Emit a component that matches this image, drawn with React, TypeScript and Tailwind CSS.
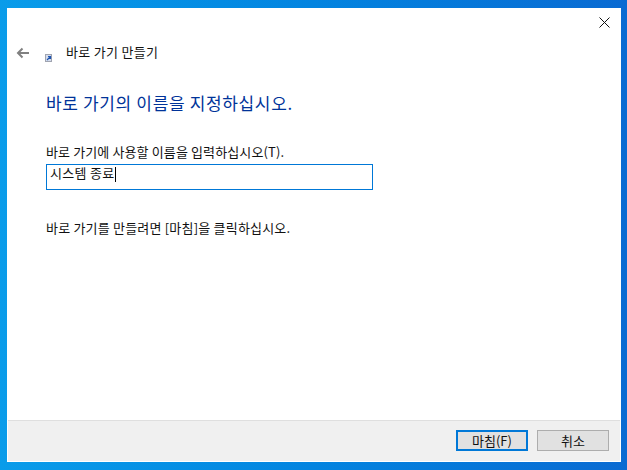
const font = "font-['Noto_Sans_CJK_KR','Liberation_Sans',sans-serif]";

function ShortcutIcon() {
  return (
    <svg width="7" height="8" viewBox="0 0 7 8" className="mt-[9px]">
      <rect x="0.5" y="0.5" width="6" height="7" fill="#d4dcec" stroke="#a0a4b0" />
      <path d="M2 6 L5 3 M3 2.5 H5.5 V5" stroke="#1f55b0" strokeWidth="1.2" fill="none" />
    </svg>
  );
}

export default function App() {
  return (
    <div className={`h-[470px] w-[627px] overflow-hidden bg-gradient-to-r from-[#0a9cea] via-[#0384e0] to-[#0a6ad2] pb-[8px] pl-[7px] pr-[6px] pt-[8px] ${font}`}>
      <div className="flex h-full flex-col border-x border-b border-white bg-white">
        <div className="flex flex-1 flex-col">
          <div className="flex justify-end pr-[10px] pt-[9px]">
            <svg width="11" height="11" viewBox="0 0 11 11">
              <path d="M0.5 0.5L10.5 10.5M10.5 0.5L0.5 10.5" stroke="#111" strokeWidth="1" fill="none" />
            </svg>
          </div>

          <div className="mt-[17px] flex items-start pl-[8px]">
            <svg width="13" height="12" viewBox="0 0 13 12" className="mt-[2px]">
              <path d="M13 6H2M6.5 1.5L2 6L6.5 10.5" stroke="#808080" strokeWidth="2" fill="none" />
            </svg>
            <div className="ml-[16px]">
              <ShortcutIcon />
            </div>
            <span className="ml-[14px] text-[13px] leading-[14px] tracking-[0.3px] text-[#111]">바로 가기 만들기</span>
          </div>

          <div className="mt-[30px] pl-[38px] text-[17px] leading-[22px] tracking-[0.65px] text-[#003399]">
            바로 가기의 이름을 지정하십시오.
          </div>

          <div className="mt-[31px] pl-[38px] text-[13px] leading-[14px] tracking-[0.12px] text-[#111]">
            바로 가기에 사용할 이름을 입력하십시오(T).
          </div>

          <div className="ml-[38px] mt-[5px] flex h-[26px] w-[327px] items-start border border-[#0078d7] pl-[3px] text-[13px] leading-[16px] tracking-[0.3px] text-[#111]">
            <span>시스템 종료</span>
            <span className="mt-[2px] h-[15px] w-px bg-black" />
          </div>

          <div className="mt-[31px] pl-[38px] text-[13px] leading-[14px] tracking-[0.2px] text-[#111]">
            바로 가기를 만들려면 [마침]을 클릭하십시오.
          </div>
        </div>

        <div className="flex h-[41px] items-start justify-end gap-[9px] border-t border-[#dfdfdf] bg-[#f0f0f0] pr-[11px] pt-[9px]">
          <button className="h-[21px] w-[72px] border-2 border-[#0078d7] bg-[#e1e1e1] text-[13px] leading-none text-[#111]">
            마침(F)
          </button>
          <button className="h-[21px] w-[72px] border border-[#adadad] bg-[#e1e1e1] text-[13px] leading-none text-[#111]">
            취소
          </button>
        </div>
      </div>
    </div>
  );
}
